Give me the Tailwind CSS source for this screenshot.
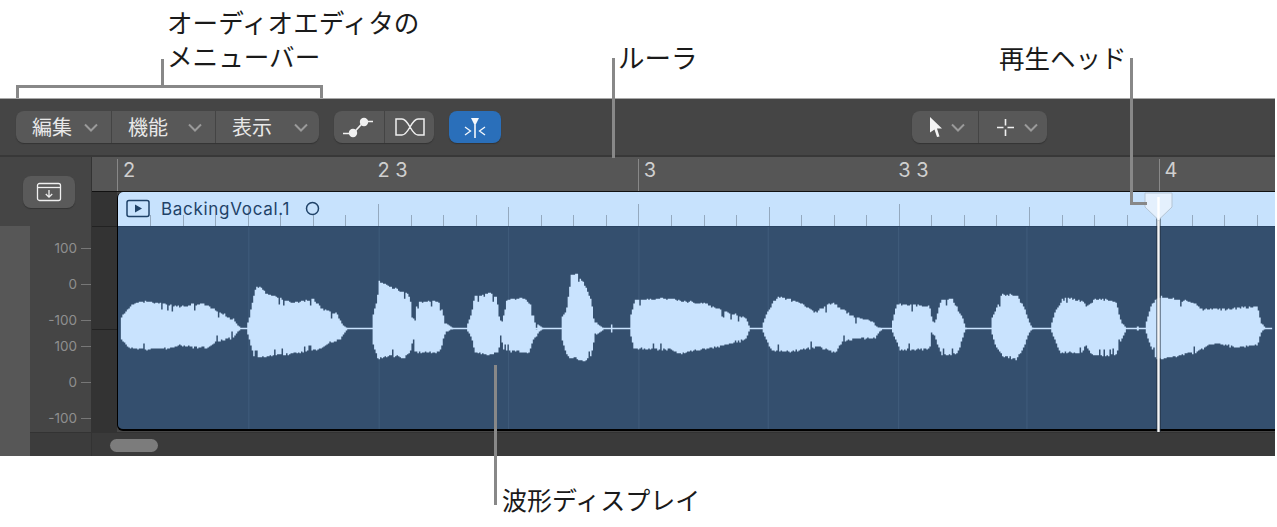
<!DOCTYPE html>
<html lang="ja">
<head>
<meta charset="utf-8">
<script src="https://cdn.jsdelivr.net/npm/@tailwindcss/browser@4"></script>
</head>
<body class="bg-white overflow-hidden">
<div class="relative w-[1277px] h-[527px] font-['Noto_Sans_CJK_JP','Noto_Sans',sans-serif]">
  <div class="h-[98px]"></div>

  <div class="w-[1275px] h-[358px] flex flex-col bg-[#454545] border-t border-[#a8a8a8] font-['Inter',sans-serif]">
    <!-- toolbar -->
    <div class="h-[58px] shrink-0 flex items-start pt-[12px] pl-[16px] border-b-2 border-[#383838] font-['Noto_Sans_CJK_JP',sans-serif]">
      <div class="flex w-[303px] h-[32px] rounded-lg bg-[#585858] shadow-[0_1px_1px_#333] text-[#e8e8e8] text-[20px] leading-[30px]">
        <div class="w-[96px] flex items-center justify-between pl-[16px] pr-[13px] border-r border-[#444]"><span>編集</span><svg width="14" height="9" viewBox="0 0 14 9"><path d="M1 1.500 7 7.500 13 1.500" fill="none" stroke="#9a9a9a" stroke-width="2"/></svg></div>
        <div class="w-[104px] flex items-center justify-between pl-[16px] pr-[13px] border-r border-[#444]"><span>機能</span><svg width="14" height="9" viewBox="0 0 14 9"><path d="M1 1.500 7 7.500 13 1.500" fill="none" stroke="#9a9a9a" stroke-width="2"/></svg></div>
        <div class="flex-1 flex items-center justify-between pl-[16px] pr-[11px]"><span>表示</span><svg width="14" height="9" viewBox="0 0 14 9"><path d="M1 1.500 7 7.500 13 1.500" fill="none" stroke="#9a9a9a" stroke-width="2"/></svg></div>
      </div>
      <div class="ml-[15px] flex w-[100px] h-[32px] rounded-lg bg-[#585858] shadow-[0_1px_1px_#333]">
        <div class="w-[51px] flex items-center pl-[8px] border-r border-[#444]">
          <svg width="32" height="24" viewBox="0 0 32 24"><path d="M1 18.500H11L22 6.500H31" fill="none" stroke="#f0f0f0" stroke-width="1.700"/><circle cx="11" cy="18" r="4.200" fill="#f0f0f0"/><circle cx="22" cy="7" r="4.200" fill="#f0f0f0"/></svg>
        </div>
        <div class="flex-1 flex items-center justify-center">
          <svg width="32" height="20" viewBox="0 0 32 20"><path d="M2 2V18H8C15 18 17 2 24 2H30V18H24C17 18 15 2 8 2H2Z" fill="none" stroke="#eeeeee" stroke-width="1.500"/></svg>
        </div>
      </div>
      <div class="ml-[15px] w-[52px] h-[32px] rounded-lg bg-[#2a6fba] shadow-[0_1px_1px_#333] flex items-center justify-center">
        <svg width="22" height="24" viewBox="0 0 22 24"><path d="M7 3H15L12 9H10Z" fill="#f4f8fc"/><path d="M11 8V23" stroke="#f4f8fc" stroke-width="1.600"/><path d="M1 12 6.500 16 1 20M21 12 15.500 16 21 20" fill="none" stroke="#f4f8fc" stroke-width="1.300"/></svg>
      </div>
      <div class="ml-[411px] flex w-[135px] h-[32px] rounded-lg bg-[#585858] shadow-[0_1px_1px_#333]">
        <div class="w-[67px] flex items-center pl-[17px] gap-[8px] border-r border-[#444]">
          <svg width="14" height="22" viewBox="0 0 14 22"><path d="M1 1 13 12.500H8L10.500 20.500 8 21 5.500 13.500 1 16.500Z" fill="#f4f4f4"/></svg>
          <svg width="14" height="9" viewBox="0 0 14 9"><path d="M1 1.500 7 7.500 13 1.500" fill="none" stroke="#9a9a9a" stroke-width="2"/></svg>
        </div>
        <div class="flex-1 flex items-center pl-[18px] gap-[10px]">
          <svg width="17" height="17" viewBox="0 0 17 17"><path d="M0 8.500H6.500M10.500 8.500H17M8.500 0V6.500M8.500 10.500V17" stroke="#f0f0f0" stroke-width="1.600"/></svg>
          <svg width="14" height="9" viewBox="0 0 14 9"><path d="M1 1.500 7 7.500 13 1.500" fill="none" stroke="#9a9a9a" stroke-width="2"/></svg>
        </div>
      </div>
    </div>

    <!-- editor -->
    <div class="flex-1 flex min-h-0">
      <!-- left column -->
      <div class="w-[92px] shrink-0 flex flex-col border-r border-[#333]">
        <div class="h-[69px] shrink-0 pl-[23px] pt-[19px]">
          <div class="w-[52px] h-[32px] rounded-lg bg-[#5a5a5a] shadow-[0_1px_1px_#333] flex items-center justify-center">
            <svg width="26" height="20" viewBox="0 0 26 20"><rect x="1.500" y="1.500" width="23" height="17" rx="2" fill="none" stroke="#f0f0f0" stroke-width="1.300"/><path d="M1.500 5.500H24.500" stroke="#f0f0f0" stroke-width="1.300"/><path d="M13 8V15M9.800 12 13 15.200 16.200 12" fill="none" stroke="#f0f0f0" stroke-width="1.300"/></svg>
          </div>
        </div>
        <div class="flex-1 flex">
          <div class="w-[30px] bg-[#575757]"></div>
          <div class="flex-1 flex flex-col">
            <div class="h-[206px] pt-[4px] text-[13.500px] leading-[36px] text-[#8f8f8f]">
              <div class="h-[36px] flex items-center justify-end gap-[4px]"><span>100</span><i class="block w-[10px] h-px bg-[#777]"></i></div>
              <div class="h-[36px] flex items-center justify-end gap-[4px]"><span>0</span><i class="block w-[10px] h-px bg-[#777]"></i></div>
              <div class="h-[36px] flex items-center justify-end gap-[4px]"><span>-100</span><i class="block w-[10px] h-px bg-[#777]"></i></div>
              <div class="h-[36px] -mt-[10px] flex items-center justify-end gap-[4px]"><span>100</span><i class="block w-[10px] h-px bg-[#777]"></i></div>
              <div class="h-[36px] flex items-center justify-end gap-[4px]"><span>0</span><i class="block w-[10px] h-px bg-[#777]"></i></div>
              <div class="h-[36px] flex items-center justify-end gap-[4px]"><span>-100</span><i class="block w-[10px] h-px bg-[#777]"></i></div>
            </div>
            <div class="flex-1 bg-[#3c3c3c] border-t border-[#333]"></div>
          </div>
        </div>
      </div>

      <!-- timeline -->
      <div class="flex-1 flex flex-col min-w-0">
        <!-- ruler -->
        <div class="h-[35px] shrink-0 flex bg-[#565656] pl-[25px] pt-[2px] text-[20px] leading-[22px] text-[#cfcfcf] border-b border-black/80 overflow-hidden">
          <div class="w-[520.8px] shrink-0 flex h-[33px]"><div class="w-[260.4px] border-l border-[#888] pl-[5px]">2</div><div class="whitespace-pre">2 3</div></div>
          <div class="w-[520.8px] shrink-0 flex h-[33px]"><div class="w-[260.4px] border-l border-[#888] pl-[5px]">3</div><div class="whitespace-pre">3 3</div></div>
          <div class="w-[100px] shrink-0 border-l border-[#888] pl-[5px] h-[33px]">4</div>
        </div>
        <!-- region row -->
        <div class="h-[240px] shrink-0 flex">
          <div class="w-[25px] shrink-0 flex flex-col bg-[#333]">
            <div class="h-[35px] border-b border-[#222]"></div>
            <div class="h-[103px] border-b border-[#222]"></div>
          </div>
          <div class="flex-1 h-[239px] flex flex-col rounded-l-md overflow-hidden border-l border-b-2 border-black bg-[#344f6e]">
            <div class="relative h-[35px] shrink-0 bg-[#c7e2fd] border-b border-[#2a4464] flex items-center pl-[8px] pb-[1px] text-[#1f4268]">
              <svg class="absolute left-0 top-0" width="1157" height="34" viewBox="118 192 1157 34"><g id="ticks"></g></svg>
              <svg class="relative" width="24" height="19" viewBox="0 0 24 19"><rect x="1" y="1.500" width="22" height="16" rx="2" fill="#c7e2fd" stroke="#1f4268" stroke-width="1.500"/><path d="M9 5.500 16 9.500 9 13.500Z" fill="#1f4268"/></svg>
              <span class="relative ml-[11px] text-[17px] leading-[20px] tracking-[0.7px]">BackingVocal.1</span>
              <svg class="relative ml-[15px]" width="15" height="15" viewBox="0 0 15 15"><circle cx="7.500" cy="7.500" r="6" fill="#c7e2fd" stroke="#1f4268" stroke-width="1.500"/></svg>
            </div>
            <svg class="block" width="1157" height="203" viewBox="118 227 1157 203"><g id="grid"></g><path id="wave" fill="#c9e3fe"></path></svg>
          </div>
        </div>
        <!-- scroller -->
        <div class="flex-1 bg-[#3a3a3a] border-t border-[#333] pl-[18px] pt-[6px]">
          <div class="w-[48px] h-[13px] rounded-full bg-[#7c7c7c]"></div>
        </div>
      </div>
    </div>
  </div>

  <!-- playhead -->
  <svg class="absolute left-[1143px] top-[192px]" width="32" height="242" viewBox="0 0 32 242"><path d="M14 20V240M17 20V240" stroke="#1e2a38" stroke-width="1"/><path d="M15.500 28V240" stroke="#f5f5f5" stroke-width="2.400"/><path d="M2 1H29V15L15.500 28 2 15Z" fill="#e4f0fd" stroke="#b4c4d4" stroke-width="1"/><path d="M15.500 5V28" stroke="#ffffff" stroke-width="2.400"/></svg>

  <!-- callout lines -->
  <div class="absolute left-[16px] top-[85px] w-[307px] h-[13px] border-[3px] border-b-0 border-[#888]"></div>
  <div class="absolute left-[161px] top-[59px] w-[3px] h-[27px] bg-[#888]"></div>
  <div class="absolute left-[612px] top-[58px] w-[3px] h-[100px] bg-[#888]"></div>
  <div class="absolute left-[1130px] top-[58px] w-[17px] h-[147px] border-l-[3px] border-b-[3px] border-[#888]"></div>
  <div class="absolute left-[494px] top-[365px] w-[3px] h-[140px] bg-[#888]"></div>

  <!-- callout texts -->
  <div class="absolute left-[167px] top-[5px] text-[25.600px] leading-[34px] text-[#1a1a1a]">オーディオエディタの<br>メニューバー</div>
  <div class="absolute left-[618px] top-[40px] text-[26.500px] leading-[34px] text-[#1a1a1a]">ルーラ</div>
  <div class="absolute left-[999px] top-[40px] text-[25.500px] leading-[34px] text-[#1a1a1a]">再生ヘッド</div>
  <div class="absolute left-[502px] top-[482px] text-[25px] leading-[34px] text-[#1a1a1a]">波形ディスプレイ</div>
</div>

<script>
  var segs = [
    {t:[[118,322],[121,316],[128,308],[133,303],[143,302],[167,305],[177,308],[190,305],[200,304],[217,313],[230,320],[238,329]],
     b:[[118,336],[120,340],[127,348],[143,350],[167,349],[177,346],[190,348],[205,348],[213,342],[230,338],[238,329]]},
    {t:[[245,329],[248,320],[252,300],[255,287],[258,288],[263,294],[277,299],[293,303],[300,302],[310,299],[320,310],[335,315],[340,325],[345,329]],
     b:[[245,329],[248,338],[253,357],[260,358],[273,356],[300,353],[317,350],[328,342],[337,340],[343,332],[345,329]]},
    {t:[[371,329],[373,315],[377,300],[379,281],[388,287],[402,293],[408,297],[410,318],[413,320],[415,303],[420,302],[430,301],[438,303],[442,318],[443,323],[450,328],[452,329]],
     b:[[371,329],[372,342],[378,360],[388,356],[402,358],[408,353],[412,338],[413,352],[417,353],[430,353],[438,352],[442,338],[445,332],[452,329]]},
    {t:[[466,329],[472,313],[475,295],[480,297],[488,293],[495,298],[498,322],[501,322],[505,302],[510,299],[525,299],[530,308],[533,322],[542,329]],
     b:[[466,329],[472,338],[475,353],[487,356],[497,352],[499,335],[502,351],[528,353],[532,340],[538,332],[542,329]]},
    {t:[[561,329],[561,320],[567,312],[572,275],[577,275],[585,288],[590,300],[593,322],[603,329]],
     b:[[561,329],[562,338],[568,357],[582,362],[590,357],[594,335],[602,331],[603,329]]},
    {t:[[630,329],[630,323],[636,300],[647,300],[663,299],[683,301],[707,305],[723,312],[745,318],[750,329]],
     b:[[630,329],[635,349],[670,350],[680,355],[693,351],[717,347],[745,340],[750,329]]},
    {t:[[763,329],[768,315],[778,297],[797,302],[815,313],[833,303],[847,313],[850,315],[858,319],[870,320],[878,328],[883,329]],
     b:[[763,329],[768,340],[773,351],[790,352],[817,347],[835,353],[843,342],[850,340],[875,338],[883,329]]},
    {t:[[893,329],[899,305],[930,307],[933,323],[936,322],[942,300],[953,300],[963,318],[967,329]],
     b:[[893,329],[899,342],[902,350],[930,350],[933,333],[937,342],[942,355],[958,355],[965,333],[967,329]]},
    {t:[[993,329],[993,322],[998,312],[1005,295],[1017,295],[1025,307],[1030,322],[1034,329]],
     b:[[993,329],[998,345],[1005,357],[1017,360],[1025,348],[1030,333],[1034,329]]},
    {t:[[1053,329],[1058,313],[1067,297],[1085,302],[1088,307],[1097,299],[1117,302],[1123,323],[1128,329]],
     b:[[1053,329],[1058,340],[1063,353],[1083,354],[1087,345],[1095,357],[1117,355],[1122,342],[1127,332],[1128,329]]},
    {t:[[1148,329],[1155,305],[1162,297],[1197,303],[1203,310],[1233,310],[1242,308],[1260,308],[1263,323],[1268,329]],
     b:[[1148,329],[1155,348],[1160,360],[1197,353],[1217,343],[1237,348],[1260,345],[1263,333],[1268,329]]}
  ];
  function at(p, x) {
    for (var i = 0; i < p.length - 1; i++) {
      if (x <= p[i + 1][0]) {
        var d = p[i + 1][0] - p[i][0] || 1;
        return p[i][1] + (p[i + 1][1] - p[i][1]) * (x - p[i][0]) / d;
      }
    }
    return p[p.length - 1][1];
  }
  function jit(x, k) {
    var v = Math.sin(x * 12.9898 + k * 78.233) * 43758.5453;
    v = v - Math.floor(v);
    return v > 0.94 ? 6 : (v - 0.5) * 2.4;
  }
  var d = 'M118 328.200H1275V329.800H118Z';
  segs.forEach(function (s) {
    var x0 = s.t[0][0], x1 = s.t[s.t.length - 1][0], top = [], bot = [], x;
    for (x = x0; x < x1; x += 1.5) {
      var edge = Math.min(x - x0, x1 - x) > 6 ? 1 : 0;
      var sx = x - x0 < 12 ? x + 2 : x;
      var ty = Math.round(at(s.t, sx) + edge * jit(x, 1));
      var by = Math.round(at(s.b, sx) - edge * jit(x, 2));
      top.push(x + ' ' + ty, (x + 1.5) + ' ' + ty);
      bot.unshift((x + 1.5) + ' ' + by, x + ' ' + by);
    }
    d += 'M' + top.concat(bot).join('L') + 'Z';
  });
  document.getElementById('wave').setAttribute('d', d + 'M610.500 325H612V333H610.500ZM1139 327H1141V331H1139Z');

  var NS = 'http://www.w3.org/2000/svg';
  [246, 377, 507, 638, 768, 899, 1028].forEach(function (x) {
    var r = document.createElementNS(NS, 'rect');
    r.setAttribute('x', x); r.setAttribute('y', 227); r.setAttribute('width', 1.2); r.setAttribute('height', 203);
    r.setAttribute('fill', '#3e5a79');
    document.getElementById('grid').appendChild(r);
  });
  for (var k = 1; k <= 35; k++) {
    var x = Math.round(117.6 + 32.55 * k);
    var y = k % 8 === 0 ? 204 : (k % 4 === 0 ? 207 : 215);
    var l = document.createElementNS(NS, 'rect');
    l.setAttribute('x', x); l.setAttribute('y', y); l.setAttribute('width', 1); l.setAttribute('height', 226 - y);
    l.setAttribute('fill', '#94a9bf');
    document.getElementById('ticks').appendChild(l);
  }
</script>
</body>
</html>
